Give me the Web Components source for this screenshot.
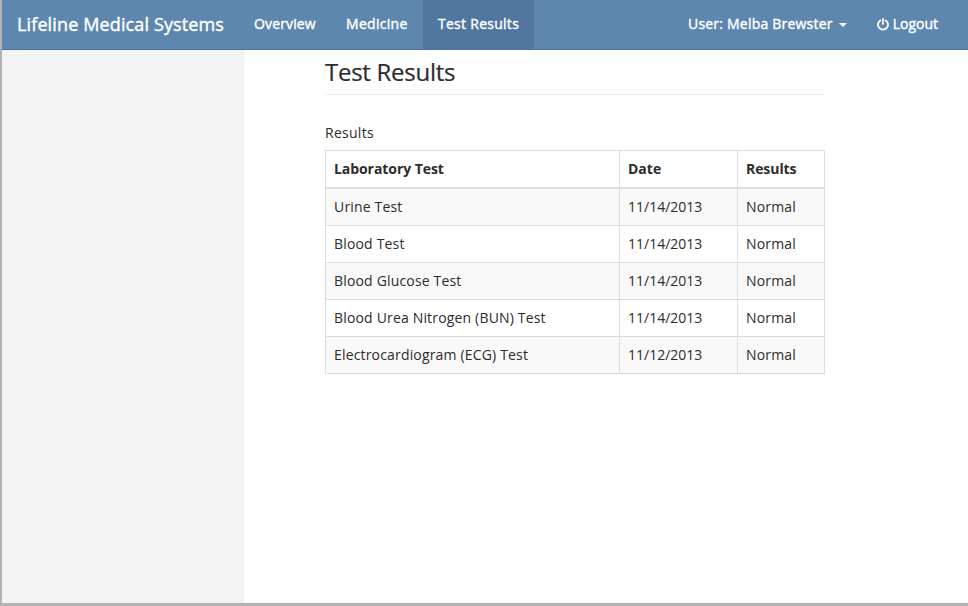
<!DOCTYPE html>
<html lang="en">
<head>
<meta charset="utf-8">
<title>Lifeline Medical Systems</title>
<style>
body{margin:0;font:14px/20px "Open Sans","Noto Sans",sans-serif;color:#2c2c2c;background:#fff}
</style>
</head>
<body>
<medical-app>
  <nav-bar slot="nav" brand="Lifeline Medical Systems">
    <nav-link style="width:92px;letter-spacing:.14px">Overview</nav-link>
    <nav-link style="width:92px;letter-spacing:.3px">Medicine</nav-link>
    <nav-link style="width:111px;letter-spacing:.27px" active>Test Results</nav-link>
    <nav-link style="letter-spacing:.21px" slot="end" caret>User: Melba Brewster</nav-link>
    <nav-link slot="end" power>Logout</nav-link>
  </nav-bar>
  <page-heading>Test Results</page-heading>
  <results-table caption="Results">
    <result-row head><span>Laboratory Test</span><span slot="date">Date</span><span slot="result">Results</span></result-row>
    <result-row shaded><span>Urine Test</span><span slot="date">11/14/2013</span><span slot="result">Normal</span></result-row>
    <result-row><span>Blood Test</span><span slot="date">11/14/2013</span><span slot="result">Normal</span></result-row>
    <result-row shaded><span>Blood Glucose Test</span><span slot="date">11/14/2013</span><span slot="result">Normal</span></result-row>
    <result-row><span>Blood Urea Nitrogen (BUN) Test</span><span slot="date">11/14/2013</span><span slot="result">Normal</span></result-row>
    <result-row shaded><span>Electrocardiogram (ECG) Test</span><span slot="date">11/12/2013</span><span slot="result">Normal</span></result-row>
  </results-table>
</medical-app>
<script>
const define = (name, markup) => customElements.define(name, class extends HTMLElement {
  constructor() {
    super();
    this.attachShadow({mode: 'open'}).innerHTML = markup(this);
  }
});

define('medical-app', () => `
  <style>
    :host{display:flex;flex-direction:column;box-sizing:border-box;height:606px;border-left:2px solid #b3b3b3;border-bottom:3px solid #b3b3b3}
    .body{display:grid;grid-template-columns:242px 1fr;flex:1}
    aside{background:#f4f4f4;border-right:1px solid #eee;box-sizing:border-box}
    main{padding:0 143px 0 81px}
  </style>
  <slot name="nav"></slot>
  <div class="body"><aside></aside><main><slot></slot></main></div>`);

define('nav-bar', el => `
  <style>
    :host{display:flex;box-sizing:border-box;height:50px;background:#5e87af;border-bottom:1px solid #4c719e;color:#fff}
    .brand{font-size:18px;line-height:20px;letter-spacing:.13px;padding:14px 15px 15px;box-sizing:border-box;width:237px;white-space:nowrap;-webkit-text-stroke:.4px #fff}
    nav{display:flex}
    .end{margin-left:auto;margin-right:15px}
  </style>
  <div class="brand">${el.getAttribute('brand')}</div>
  <nav><slot></slot></nav><nav class="end"><slot name="end"></slot></nav>`);

define('nav-link', el => `
  <style>
    :host{display:flex;align-items:center;box-sizing:border-box;height:49px;padding:0 15px 1px;white-space:nowrap;-webkit-text-stroke:.38px #fff}
    :host([active]){background:#5076a0}
    i{margin-left:6px;border:4px solid transparent;border-top-color:#fff;border-bottom:0;margin-top:2px}
    svg{width:12px;height:13px;margin-right:4px}
  </style>
  ${el.hasAttribute('power') ? '<svg viewBox="0 0 12 13" fill="none" stroke="#fff" stroke-width="1.8" stroke-linecap="round"><path d="M3.3 2.4a5 5 0 1 0 5.4 0M6 .9v5"/></svg>' : ''}
  <slot></slot>${el.hasAttribute('caret') ? '<i></i>' : ''}`);

define('page-heading', () => `
  <style>
    :host{display:block;box-sizing:border-box;height:45px;padding-top:9px;border-bottom:1px solid #eee;margin-bottom:28px}
    h1{margin:0;font-size:24px;line-height:26px;font-weight:400;letter-spacing:-.27px;-webkit-text-stroke:.2px}
  </style>
  <h1><slot></slot></h1>`);

define('results-table', el => `
  <style>
    :host{display:block}
    p{margin:0 0 7px;letter-spacing:.27px}
    div{border:1px solid #ddd;border-width:1px 0 0 1px}
  </style>
  <p>${el.getAttribute('caption')}</p><div><slot></slot></div>`);

define('result-row', () => `
  <style>
    :host{display:grid;grid-template-columns:294px 118px 87px;border-bottom:1px solid #ddd;letter-spacing:.17px}
    :host([head]){border-bottom-width:2px;font-weight:700;letter-spacing:-.07px}
    :host([shaded]){background:#f9f9f9}
    div{padding:8px;border-right:1px solid #ddd;white-space:nowrap}
    .date{letter-spacing:0}
  </style>
  <div><slot></slot></div><div class="date"><slot name="date"></slot></div><div><slot name="result"></slot></div>`);
</script>
</body>
</html>
